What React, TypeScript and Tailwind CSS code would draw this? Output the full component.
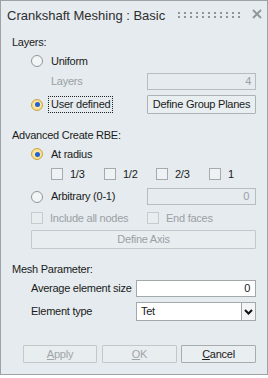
import React from "react";

function Radio({ checked }: { checked?: boolean }) {
  return checked ? (
    <span className="w-[12px] h-[12px] rounded-full border border-[#c9a445] bg-[radial-gradient(circle,#fff4c8_0%,#f5d46e_100%)] flex items-center justify-center shrink-0">
      <span className="w-[5px] h-[5px] rounded-full bg-[#2260d4]" />
    </span>
  ) : (
    <span className="w-[12px] h-[12px] rounded-full border border-[#8f9497] bg-[#f3f6f7] shrink-0" />
  );
}

function Check({ disabled }: { disabled?: boolean }) {
  return disabled ? (
    <span className="w-[12px] h-[12px] border border-[#c6cbce] bg-[#e8edf0] shrink-0" />
  ) : (
    <span className="w-[12px] h-[12px] border border-[#a5aaad] bg-[#eef2f4] shrink-0" />
  );
}

function Dots() {
  const xs = Array.from({ length: 11 }, (_, i) => i * 6);
  return (
    <svg width="62" height="6" viewBox="0 0 62 6" className="ml-auto mb-[2px] shrink-0">
      {xs.map((x) => (
        <g key={x} fill="#8e9498">
          <rect x={x} y={0} width={2} height={2} />
          <rect x={x} y={4} width={2} height={2} />
        </g>
      ))}
    </svg>
  );
}

export default function App() {
  return (
    <div className="w-[268px] h-[375px] border border-[#9ca2a6] bg-[#e5ebee] flex flex-col text-[11px] leading-[15px] text-[#1b1b1b] tracking-[-0.25px] font-['Liberation_Sans',Arial,sans-serif]">
      {/* Title */}
      <div className="h-[29px] flex items-center pl-[6px] pr-[5px]">
        <span className="text-[13px] text-[#2e2e2e] tracking-normal whitespace-nowrap">
          Crankshaft Meshing : Basic
        </span>
        <Dots />
        <svg width="10" height="10" viewBox="0 0 10 10" className="ml-[12px] mb-[4px] shrink-0">
          <path d="M1 1 L9 9 M9 1 L1 9" stroke="#8e9498" strokeWidth="1.8" />
        </svg>
      </div>

      {/* Layers: */}
      <div className="mt-[5px] h-[15px] flex items-center pl-[11px]">Layers:</div>

      {/* Uniform */}
      <div className="mt-[5px] h-[12px] flex items-center pl-[30px]">
        <Radio />
        <span className="ml-[8px]">Uniform</span>
      </div>

      {/* Layers input */}
      <div className="mt-[6px] h-[17px] flex items-center pl-[50px] pr-[11px]">
        <span className="text-[#9ba0a4]">Layers</span>
        <div className="ml-auto w-[109px] h-[17px] border border-[#b7bcbf] flex items-center justify-end pr-[4px] text-[#9ba0a4]">
          4
        </div>
      </div>

      {/* User defined */}
      <div className="mt-[5px] h-[19px] flex items-center pl-[30px] pr-[11px]">
        <Radio checked />
        <span className="ml-[5px] h-[17px] border border-dotted border-[#222] px-[2px] flex items-center">
          User defined
        </span>
        <div className="ml-auto w-[109px] h-[19px] border border-[#adb2b5] bg-[#e9eef1] flex items-center justify-center rounded-[1px]">
          Define Group Planes
        </div>
      </div>

      {/* Advanced Create RBE */}
      <div className="mt-[14px] h-[15px] flex items-center pl-[11px]">Advanced Create RBE:</div>

      {/* At radius */}
      <div className="mt-[5px] h-[12px] flex items-center pl-[30px]">
        <Radio checked />
        <span className="ml-[8px]">At radius</span>
      </div>

      {/* fractions */}
      <div className="mt-[8px] h-[12px] flex items-center pl-[50px]">
        <div className="w-[53px] flex items-center">
          <Check />
          <span className="ml-[7px]">1/3</span>
        </div>
        <div className="w-[52px] flex items-center">
          <Check />
          <span className="ml-[7px]">1/2</span>
        </div>
        <div className="w-[53px] flex items-center">
          <Check />
          <span className="ml-[7px]">2/3</span>
        </div>
        <div className="flex items-center">
          <Check />
          <span className="ml-[7px]">1</span>
        </div>
      </div>

      {/* Arbitrary */}
      <div className="mt-[8px] h-[17px] flex items-center pl-[30px] pr-[11px]">
        <Radio />
        <span className="ml-[8px]">Arbitrary (0-1)</span>
        <div className="ml-auto w-[109px] h-[17px] border border-[#b7bcbf] flex items-center justify-end pr-[6px] text-[#9ba0a4]">
          0
        </div>
      </div>

      {/* Include all nodes / End faces */}
      <div className="mt-[7px] h-[12px] flex items-center pl-[30px] text-[#9ba0a4]">
        <div className="w-[116px] flex items-center">
          <Check disabled />
          <span className="ml-[7px]">Include all nodes</span>
        </div>
        <div className="flex items-center">
          <Check disabled />
          <span className="ml-[7px]">End faces</span>
        </div>
      </div>

      {/* Define Axis */}
      <div className="mt-[6px] h-[19px] flex pl-[30px] pr-[11px]">
        <div className="flex-1 h-[19px] border border-[#c3c8cb] bg-[#e8edf0] flex items-center justify-center text-[#9ba0a4] rounded-[1px]">
          Define Axis
        </div>
      </div>

      {/* Mesh Parameter */}
      <div className="mt-[13px] h-[15px] flex items-center pl-[11px]">Mesh Parameter:</div>

      {/* Average element size */}
      <div className="mt-[3px] h-[17px] flex items-center pl-[30px] pr-[11px]">
        <span>Average element size</span>
        <div className="ml-auto w-[120px] h-[17px] border border-[#a3a8ab] bg-white flex items-center justify-end pr-[5px]">
          0
        </div>
      </div>

      {/* Element type */}
      <div className="mt-[5px] h-[19px] flex items-center pl-[30px] pr-[11px]">
        <span>Element type</span>
        <div className="ml-auto w-[120px] h-[19px] border border-[#a3a8ab] bg-white flex items-stretch">
          <span className="flex-1 flex items-center pl-[4px]">Tet</span>
          <span className="w-[14px] border-l border-[#a3a8ab] bg-[#f2f4f5] flex items-center justify-center">
            <svg width="9" height="6" viewBox="0 0 9 6">
              <path d="M1 1 L4.5 4.5 L8 1" stroke="#111" strokeWidth="2" fill="none" />
            </svg>
          </span>
        </div>
      </div>

      {/* Bottom buttons */}
      <div className="mt-[24px] h-[18px] flex items-center pl-[22px] pr-[11px]">
        <div className="w-[74px] h-[18px] border border-[#c3c8cb] bg-[#e8edf0] flex items-center justify-center text-[#a0a5a9] rounded-[1px]">
          <span><span className="underline">A</span>pply</span>
        </div>
        <div className="ml-[5px] w-[75px] h-[18px] border border-[#c3c8cb] bg-[#e8edf0] flex items-center justify-center text-[#a0a5a9] rounded-[1px]">
          <span><span className="underline">O</span>K</span>
        </div>
        <div className="ml-[4px] w-[75px] h-[18px] border border-[#a7acaf] bg-[#e9eef1] flex items-center justify-center rounded-[1px]">
          <span><span className="underline">C</span>ancel</span>
        </div>
      </div>
    </div>
  );
}
